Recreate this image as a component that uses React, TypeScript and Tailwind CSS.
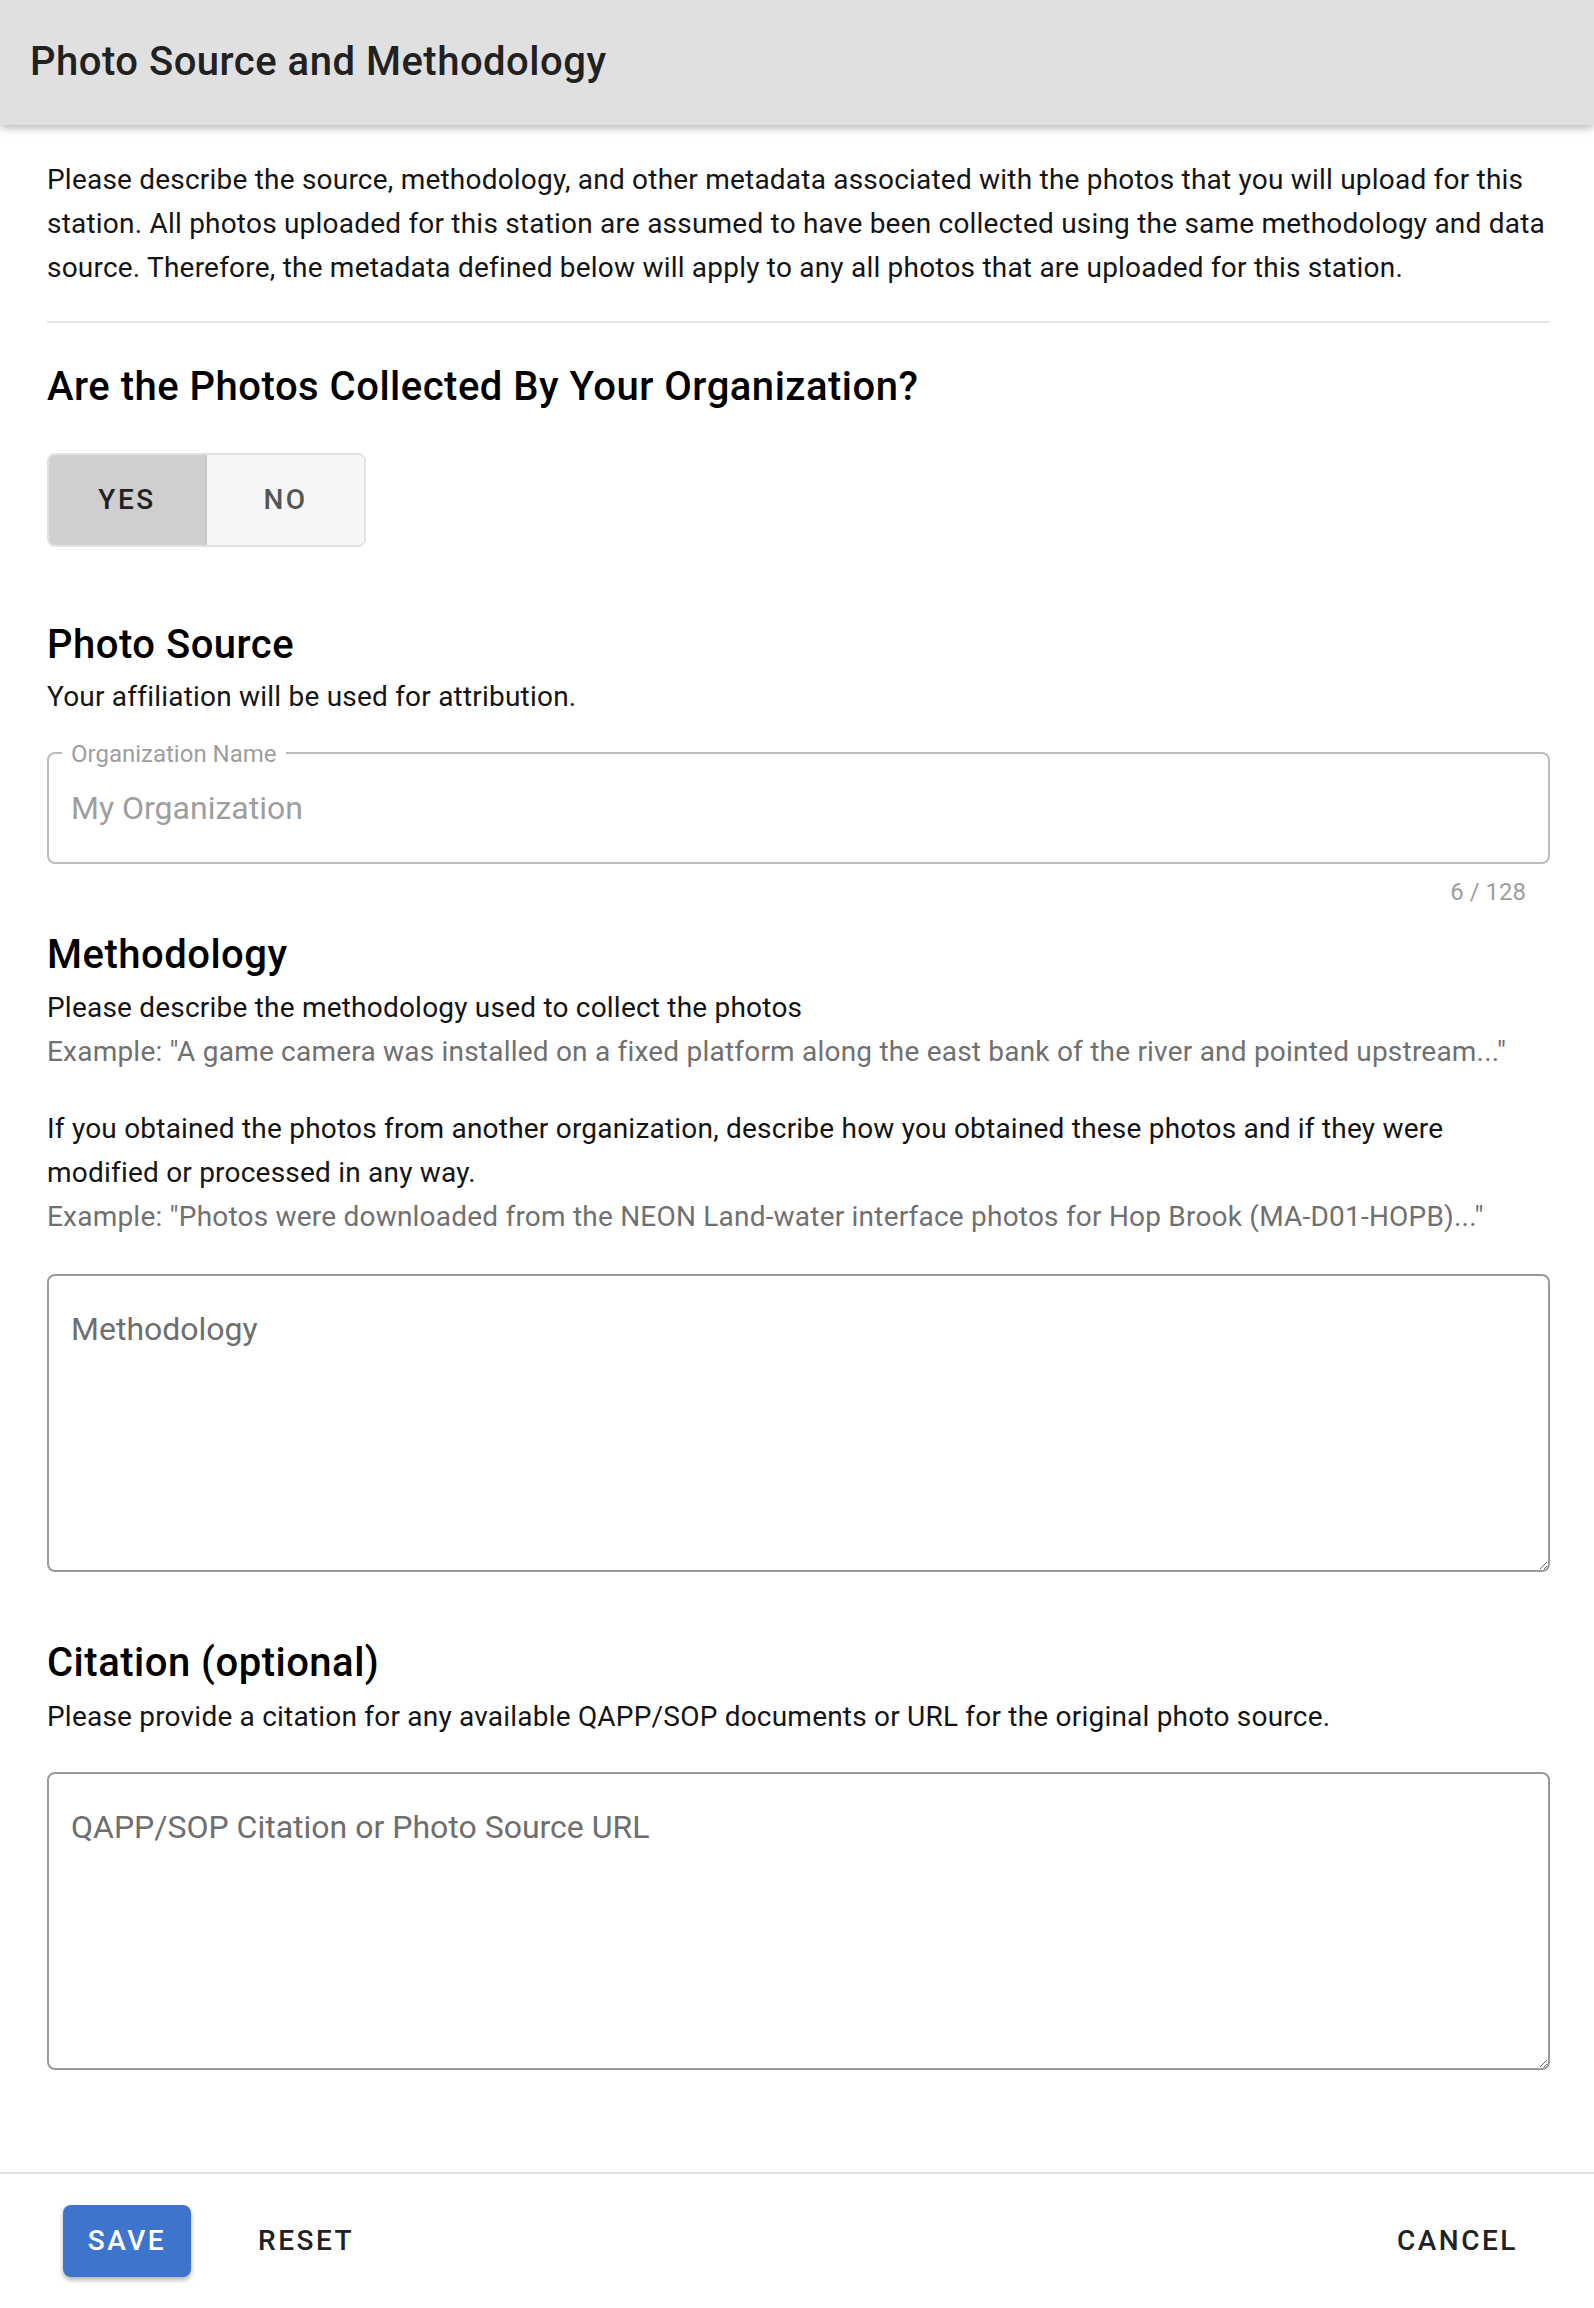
import React from "react";

export default function App() {
  return (
    <div className="w-[1594px] h-[2308px] bg-white flex flex-col font-['Roboto',sans-serif] text-[#141414]">
      <header className="relative z-10 h-[125px] shrink-0 bg-[#e0e0e0] shadow-[0_3px_8px_rgba(0,0,0,0.28)] flex items-center px-[30px] pb-[2px]">
        <h1 className="text-[40px] leading-[48px] font-medium text-[#212121] tracking-[0.0125em]">
          Photo Source and Methodology
        </h1>
      </header>

      <main className="flex-1 pl-[47px] pr-[44px] pt-[33px] flex flex-col text-[28px] leading-[44px] tracking-[0.0075em]">
        <p>
          Please describe the source, methodology, and other metadata associated with the photos that you will upload for this
          station. All photos uploaded for this station are assumed to have been collected using the same methodology and data
          source. Therefore, the metadata defined below will apply to any all photos that are uploaded for this station.
        </p>

        <div className="mt-[31px] h-[2px] bg-[#e3e3e3]" />

        <h2 className="mt-[40px] text-[40px] leading-[48px] font-medium text-black tracking-[0.0125em]">
          Are the Photos Collected By Your Organization?
        </h2>

        <div className="mt-[42px] flex w-[319px] h-[94px] rounded-[8px] border-2 border-[#e2e2e2] overflow-hidden">
          <button className="w-[158px] h-full bg-[#cfcfcf] border-r-2 border-[#c8c8c8] text-[28px] font-medium tracking-[0.09em] text-[#222]">
            YES
          </button>
          <button className="flex-1 h-full bg-[#f6f6f6] text-[28px] font-medium tracking-[0.09em] text-[#555]">
            NO
          </button>
        </div>

        <h2 className="mt-[74px] text-[40px] leading-[48px] font-medium text-black tracking-[0.0125em]">
          Photo Source
        </h2>
        <p className="mt-[6px]">Your affiliation will be used for attribution.</p>

        <div className="relative mt-[33px] h-[112px] rounded-[8px] border-2 border-[#bdbdbd] flex items-center px-[22px]">
          <span className="absolute left-[13px] -top-[14px] bg-white px-[9px] text-[24px] leading-[28px] text-[#9e9e9e] tracking-normal">
            Organization Name
          </span>
          <span className="text-[32px] leading-[48px] text-[#9e9e9e] tracking-normal">My Organization</span>
        </div>
        <div className="mt-[13px] flex justify-end pr-[24px] text-[24px] leading-[30px] text-[#9e9e9e] tracking-normal">6 / 128</div>

        <h2 className="mt-[24px] text-[40px] leading-[48px] font-medium text-black tracking-[0.0125em]">
          Methodology
        </h2>
        <p className="mt-[7px]">Please describe the methodology used to collect the photos</p>
        <p className="text-[#707070]">
          Example: "A game camera was installed on a fixed platform along the east bank of the river and pointed upstream..."
        </p>
        <p className="mt-[33px]">
          If you obtained the photos from another organization, describe how you obtained these photos and if they were
          modified or processed in any way.
        </p>
        <p className="text-[#707070]">
          Example: "Photos were downloaded from the NEON Land-water interface photos for Hop Brook (MA-D01-HOPB)..."
        </p>

        <textarea
          placeholder="Methodology"
          className="mt-[35px] h-[298px] w-full shrink-0 rounded-[8px] border-2 border-[#9a9a9a] px-[22px] pt-[29px] text-[32px] leading-[48px] tracking-normal text-[#222] placeholder:text-[#6e6e6e] outline-none resize-y"
        />

        <h2 className="mt-[67px] text-[40px] leading-[48px] font-medium text-black tracking-[0.0125em]">
          Citation (optional)
        </h2>
        <p className="mt-[8px]">
          Please provide a citation for any available QAPP/SOP documents or URL for the original photo source.
        </p>

        <textarea
          placeholder="QAPP/SOP Citation or Photo Source URL"
          className="mt-[33px] h-[298px] w-full shrink-0 rounded-[8px] border-2 border-[#9a9a9a] px-[22px] pt-[29px] text-[32px] leading-[48px] tracking-normal text-[#222] placeholder:text-[#6e6e6e] outline-none resize-y"
        />
      </main>

      <footer className="h-[136px] shrink-0 border-t-2 border-[#e0e0e0] flex items-center pl-[63px] pr-[76px]">
        <button className="w-[128px] h-[72px] rounded-[8px] bg-[#3f74cc] text-white text-[28px] font-medium tracking-[0.09em] shadow-[0_3px_5px_rgba(0,0,0,0.3)]">
          SAVE
        </button>
        <button className="ml-[67px] text-[28px] font-medium tracking-[0.09em] text-[#212121]">RESET</button>
        <button className="ml-auto text-[28px] font-medium tracking-[0.09em] text-[#212121]">CANCEL</button>
      </footer>
    </div>
  );
}
